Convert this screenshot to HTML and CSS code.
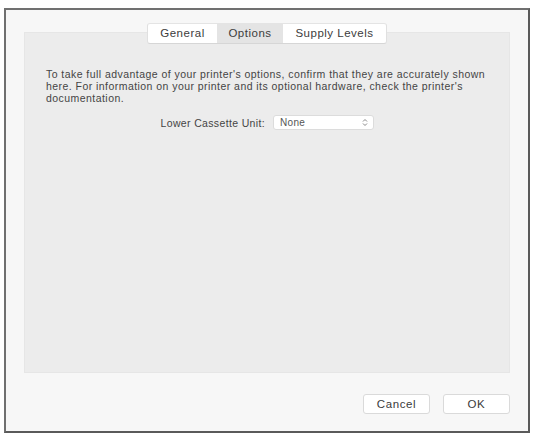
FILE: index.html
```html
<!DOCTYPE html>
<html>
<head>
<meta charset="utf-8">
<link rel="stylesheet" href="styles.css">
</head>
<body>
<div class="window">
  <div class="tabs">
    <div class="tab tab-general">General</div>
    <div class="tab tab-options selected">Options</div>
    <div class="tab tab-supply">Supply Levels</div>
  </div>
  <div class="panel">
    <p class="desc">To take full advantage of your printer's options, confirm that they are accurately shown here. For information on your printer and its optional hardware, check the printer's documentation.</p>
    <div class="field">
      <span class="label">Lower Cassette Unit:</span>
      <div class="select">
        <span>None</span>
        <svg class="arrows" width="6" height="9" viewBox="0 0 6 9"><path d="M1 3.5 L3 1.5 L5 3.5 M1 5.5 L3 7.5 L5 5.5" fill="none" stroke="#888" stroke-width="1"/></svg>
      </div>
    </div>
  </div>
  <div class="buttons">
    <div class="btn">Cancel</div>
    <div class="btn">OK</div>
  </div>
</div>
</body>
</html>
```
FILE: styles.css
```css
html, body {
  margin: 0;
  padding: 0;
  background: #ffffff;
}
body {
  font-family: "Liberation Sans", Arial, sans-serif;
  color: #3a3a3a;
}
.window {
  margin: 8px 4px 0 4px;
  border: 2px solid #707070;
  border-right-color: #5a5a5a;
  border-bottom-color: #5a5a5a;
  background: #f7f7f7;
  padding: 0 18px;
  box-sizing: border-box;
  width: 526px;
  height: 425px;
  display: flex;
  flex-direction: column;
}
.tabs {
  display: flex;
  justify-content: center;
  margin-top: 13px;
  position: relative;
  z-index: 1;
}
.tab {
  height: 19px;
  line-height: 19px;
  font-size: 11.5px;
  letter-spacing: 0.5px;
  text-align: center;
  background: #ffffff;
  color: #3c3c3c;
  border-top: 1px solid #e4e4e4;
  border-bottom: 1px solid #d6d6d6;
}
.tab-general { width: 69px; border-left: 1px solid #e0e0e0; border-radius: 3px 0 0 3px; }
.tab-options { width: 66px; }
.tab-supply { width: 103px; border-right: 1px solid #e0e0e0; border-radius: 0 3px 3px 0; }
.tab.selected {
  background: #e4e4e4;
}
.panel {
  margin-top: -12px;
  height: 341px;
  box-sizing: border-box;
  background: #ececec;
  border: 1px solid #e6e6e6;
  padding: 35px 14px 0 21px;
}
.desc {
  margin: 0;
  font-size: 10.5px;
  letter-spacing: 0.45px;
  line-height: 12px;
  color: #444;
}
.field {
  display: flex;
  align-items: center;
  margin-top: 11px;
  padding-left: 106px;
}
.label {
  font-size: 10.5px;
  letter-spacing: 0.35px;
  color: #444;
  width: 113px;
  white-space: nowrap;
  text-align: right;
}
.select {
  margin-left: 8px;
  width: 101px;
  height: 15px;
  box-sizing: border-box;
  background: #ffffff;
  border: 1px solid #dcdcdc;
  border-radius: 3px;
  display: flex;
  align-items: center;
  justify-content: space-between;
  padding: 0 5px 0 6px;
  font-size: 10px;
  letter-spacing: 0.3px;
  color: #555;
}
.buttons {
  display: flex;
  justify-content: flex-end;
  gap: 13px;
  margin-top: 21px;
}
.btn {
  width: 67px;
  height: 20px;
  box-sizing: border-box;
  line-height: 18px;
  text-align: center;
  background: #ffffff;
  border: 1px solid #dadada;
  border-radius: 3px;
  font-size: 11.5px;
  letter-spacing: 0.6px;
  color: #3a3a3a;
}
```
